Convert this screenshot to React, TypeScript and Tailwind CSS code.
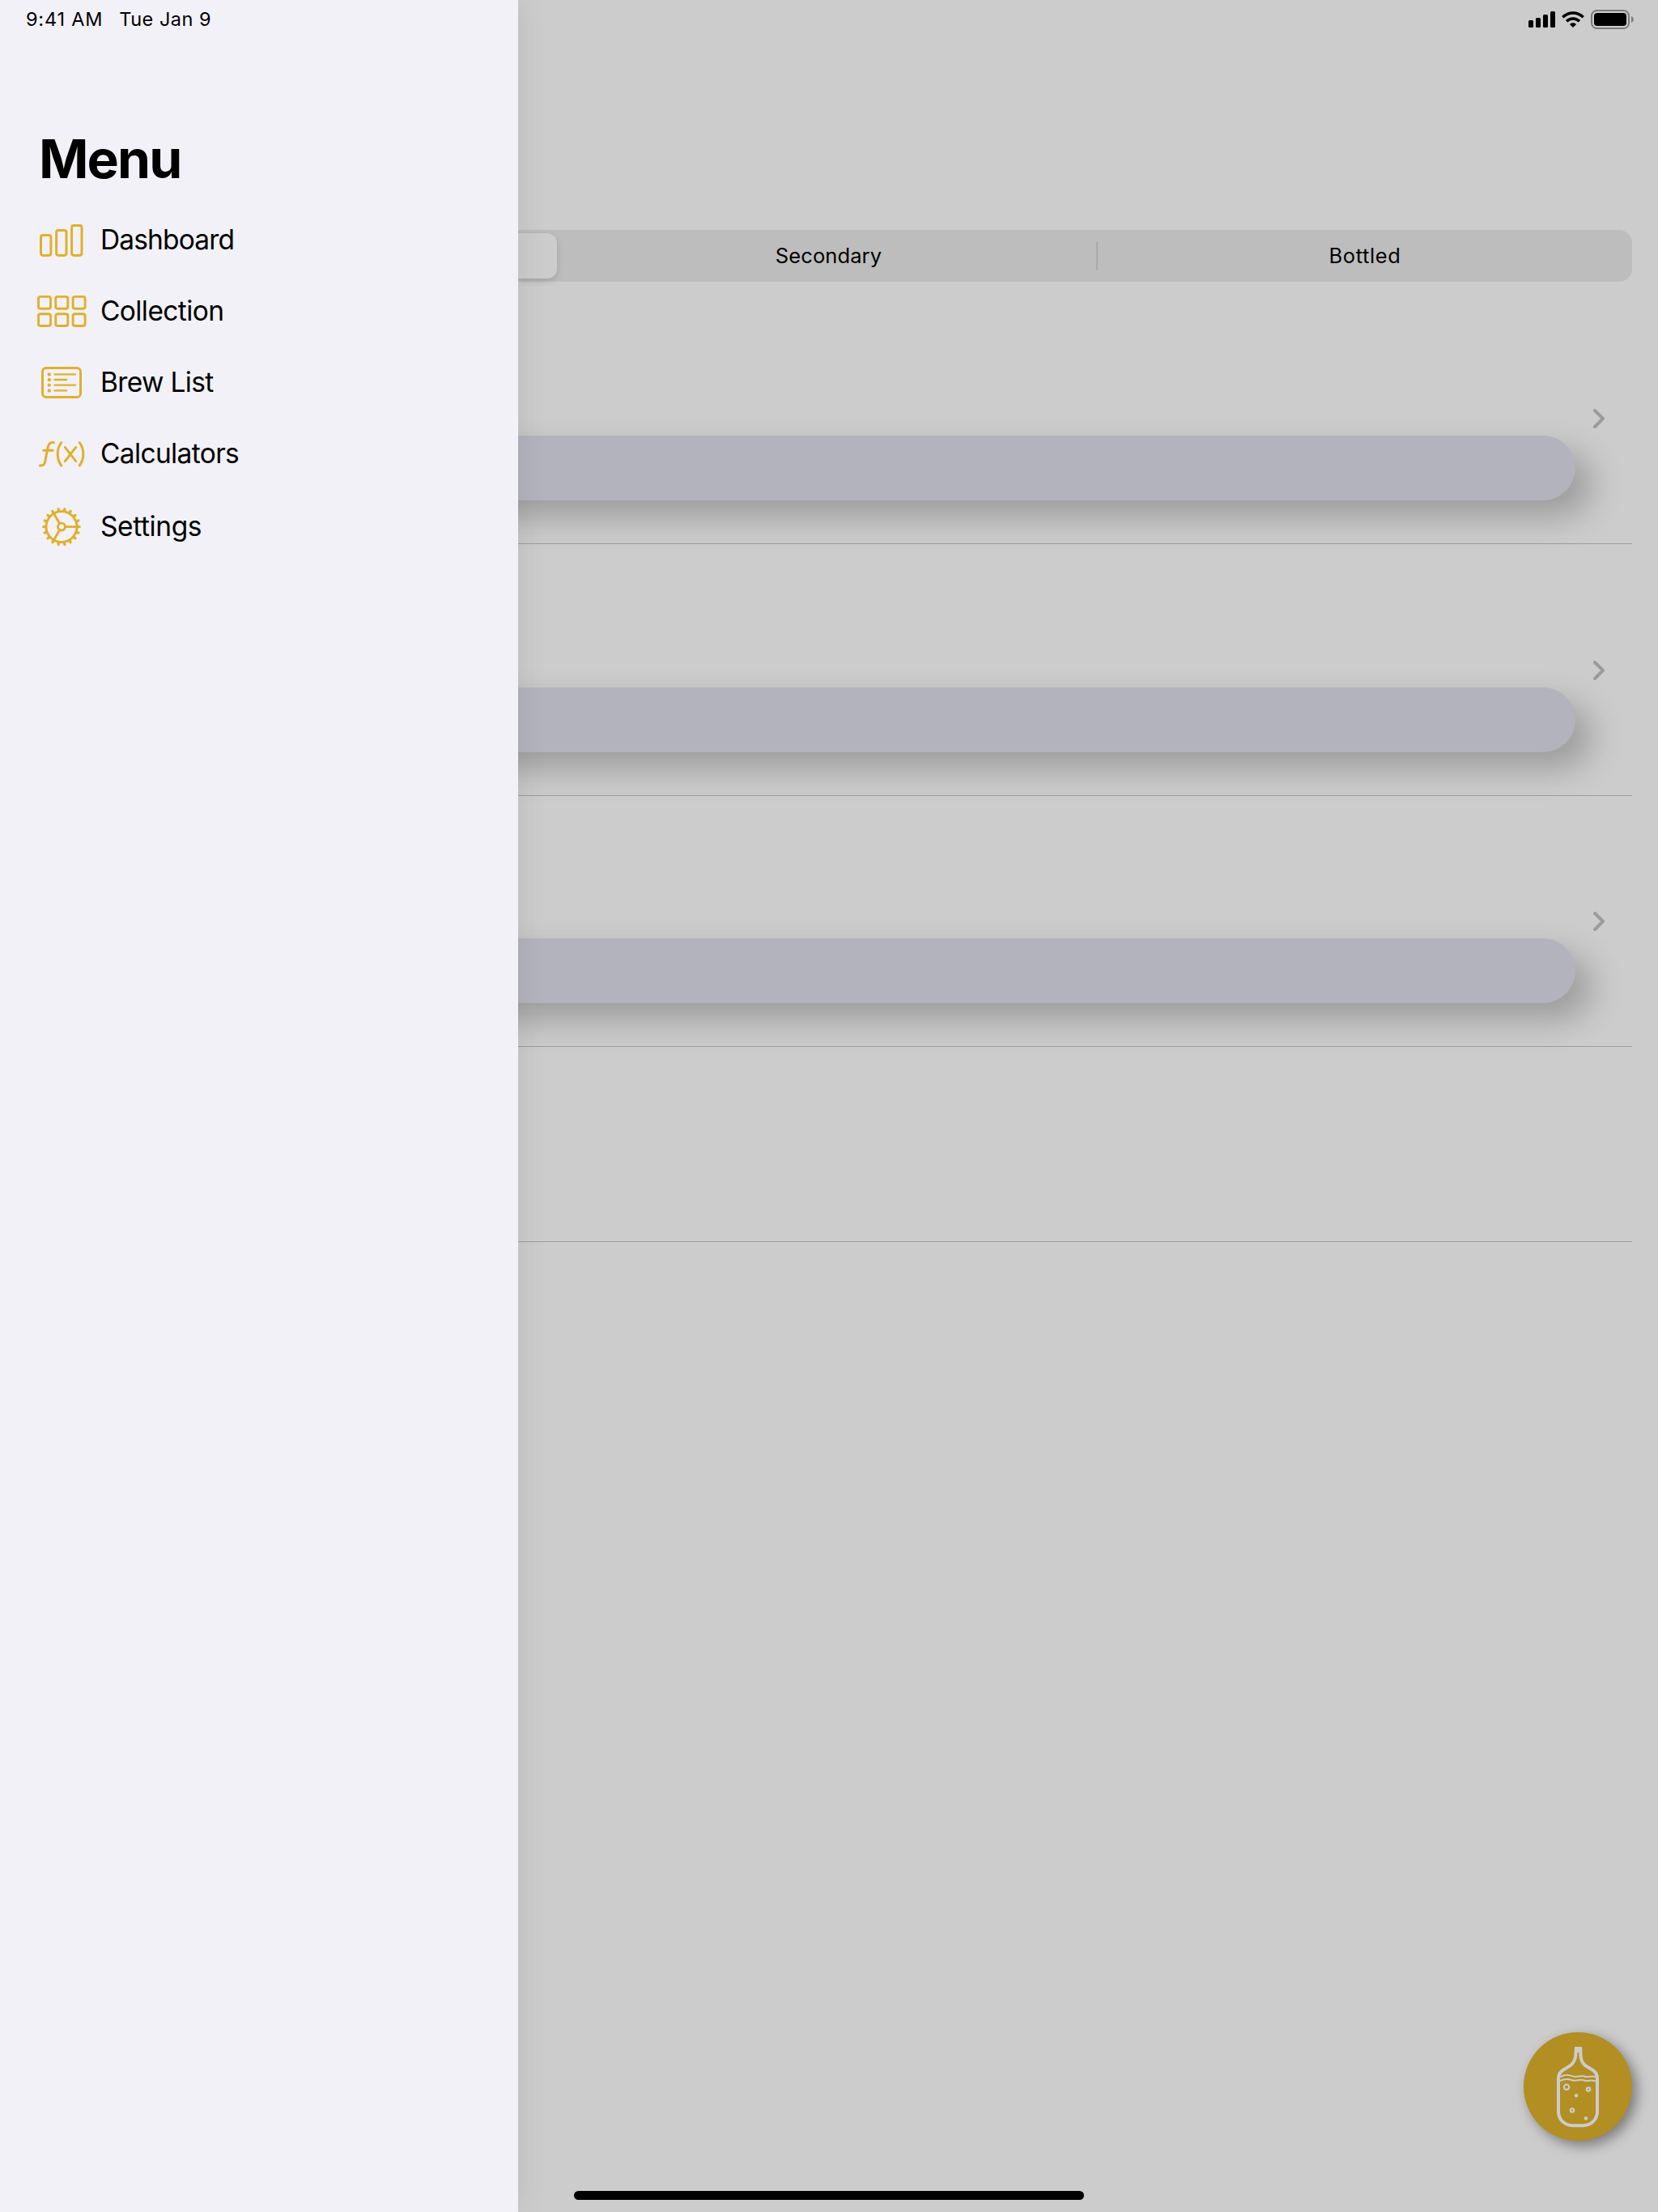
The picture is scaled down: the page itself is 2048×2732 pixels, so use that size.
import React from "react";

const GOLD = "#e0b02c";

function BarsIcon() {
  return (
    <svg width="64" height="50" viewBox="0 0 64 50" fill="none" stroke={GOLD} strokeWidth="3">
      <rect x="6.5" y="18.4" width="12.4" height="25" rx="2.6" />
      <rect x="25.6" y="12.4" width="12.4" height="31" rx="2.6" />
      <rect x="44.6" y="6.4" width="12.4" height="37" rx="2.6" />
    </svg>
  );
}

function GridIcon() {
  return (
    <svg width="64" height="50" viewBox="0 0 64 50" fill="none" stroke={GOLD} strokeWidth="2.9">
      {[3.5, 24.8, 46.1].map((x) =>
        [6.4, 27.7].map((y) => <rect key={`${x}-${y}`} x={x} y={y} width="15" height="14.8" rx="2.4" />)
      )}
    </svg>
  );
}

function ListIcon() {
  return (
    <svg width="64" height="50" viewBox="0 0 64 50" fill="none" stroke={GOLD} strokeLinecap="round">
      <rect x="8.5" y="6.4" width="47" height="36" rx="4.5" strokeWidth="3" />
      {[14.4, 21, 27.6, 34.4].map((y, i) => (
        <g key={y}>
          <circle cx="16.8" cy={y} r="2.2" fill={GOLD} stroke="none" />
          <path d={`M23.4 ${y}H${i % 2 ? 38.2 : 49}`} strokeWidth="2.3" />
        </g>
      ))}
    </svg>
  );
}

function FunctionIcon() {
  return (
    <svg width="64" height="50" viewBox="0 0 64 50" fill="none" stroke={GOLD} strokeWidth="3" strokeLinecap="round" strokeLinejoin="round">
      <path d="M5.3 39H7C9.6 39 11 37.4 11.6 34.5L15.1 16.6C15.8 12.8 17.6 10.4 20.8 10.4H22.4" />
      <path d="M9.9 20.3H21.2" />
      <path d="M31.8 10.6C25.6 18.6 25.6 30.8 31.8 39" />
      <path d="M36.3 16.4L49.7 33.6M49.7 16.4L36.3 33.6" />
      <path d="M54.2 10.6C60.4 18.6 60.4 30.8 54.2 39" />
    </svg>
  );
}

function GearIcon() {
  return (
    <svg width="64" height="50" viewBox="0 0 64 50" fill="none" stroke={GOLD} strokeWidth="2.9" className="overflow-visible">
      <circle cx="32" cy="24.6" r="19" />
      <circle cx="32" cy="24.6" r="4.5" />
      <path d="M36.5 24.6H51M29.7 20.7L22.5 8.2M29.7 28.5L22.5 41" />
      {Array.from({ length: 18 }, (_, i) => (
        <path
          key={i}
          d="M29.8 5.4L30.8 0.9H33.2L34.2 5.4Z"
          fill={GOLD}
          stroke="none"
          transform={`rotate(${i * 20 + 10} 32 24.6)`}
        />
      ))}
    </svg>
  );
}

const menu = [
  { label: "Dashboard", Icon: BarsIcon, box: "h-[88px] tracking-[-0.85px]" },
  { label: "Collection", Icon: GridIcon, box: "h-[88px] tracking-[-0.6px]" },
  { label: "Brew List", Icon: ListIcon, box: "h-[88px] tracking-[-0.65px]" },
  { label: "Calculators", Icon: FunctionIcon, box: "h-[88px] tracking-[-0.65px]" },
  { label: "Settings", Icon: GearIcon, box: "h-[92px] tracking-[-0.4px]" },
];

function StatusIcons() {
  return (
    <svg width="134" height="28" viewBox="1884 10 134 28">
      <rect x="1888" y="25" width="6" height="9" rx="1.5" />
      <rect x="1897" y="22" width="6" height="12" rx="1.5" />
      <rect x="1906" y="18" width="6" height="16" rx="1.5" />
      <rect x="1915" y="14" width="6" height="20" rx="1.5" />
      <g fill="none" stroke="#000" strokeWidth="3.6">
        <path d="M1930.3 21.3C1937.6 14.2 1948.4 14.2 1955.7 21.3" />
        <path d="M1935 26.3C1939.8 21.8 1946.2 21.8 1951 26.3" />
      </g>
      <path d="M1938.9 29.9C1941.2 27.7 1944.8 27.7 1947.1 29.9L1943 34Z" />
      <rect x="1966" y="13" width="46" height="22" rx="6.5" fill="none" stroke="#7b7b7b" strokeWidth="2" />
      <rect x="1969" y="16" width="40" height="16" rx="4" />
      <path d="M2015 20C2018.8 21.4 2018.8 26.6 2015 28Z" fill="#7b7b7b" />
    </svg>
  );
}

function Row({ top }: { top: string }) {
  return (
    <section className="flex flex-col border-b border-[#9f9fa1] pb-[53px]">
      <div className={`flex items-end justify-end pr-[33px] ${top}`}>
        <svg width="16" height="26" viewBox="0 0 16 26" fill="none" stroke="#9b9b9d" strokeWidth="4" strokeLinecap="round" strokeLinejoin="round" className="mb-[8px]">
          <path d="M3 3L13 13L3 23" />
        </svg>
      </div>
      <div className="mr-[70px] -ml-24 h-20 rounded-full bg-[#b3b3bd] shadow-[20px_20px_40px_rgba(0,0,0,0.24)]" />
    </section>
  );
}

function Bottle() {
  return (
    <svg width="134" height="134" viewBox="0 0 134 134" fill="none" stroke="#cccccc">
      <path d="M63 18H72V25H63Z" fill="#cccccc" stroke="none" />
      <path d="M64.7 20C64.7 31 63.5 36 58.5 40.5C53 45.5 43 46.5 43 57V98C43 108 51 115.2 61 115.2H73C83 115.2 91 108 91 98V57C91 46.5 81 45.5 75.5 40.5C70.5 36 70.3 31 70.3 20" strokeWidth="4" />
      <path d="M45 55.5C51 51 56 52.5 60 54.2C65 56.5 69 53 74 54.2C80 56.5 83 53.2 89 55.2" strokeWidth="2" />
      <path d="M45 60C51 57 56 58 60 59.2C65 61 69 57.5 74 59.2C80 61.5 83 57.5 89 60.5" strokeWidth="2" />
      <circle cx="53" cy="67.7" r="3.2" strokeWidth="2.2" />
      <circle cx="80" cy="70.5" r="2.2" strokeWidth="2.2" />
      <circle cx="60" cy="96.5" r="2.2" strokeWidth="2.2" />
      <circle cx="65" cy="78.3" r="2.2" fill="#cccccc" stroke="none" />
      <circle cx="77" cy="106.3" r="2.2" fill="#cccccc" stroke="none" />
    </svg>
  );
}

export default function App() {
  return (
    <div className="relative flex h-[2732px] w-[2048px] overflow-hidden bg-[#cccccc] font-['Inter','Liberation_Sans',sans-serif] text-black">
      <aside className="z-10 flex w-[640px] shrink-0 flex-col bg-[#f2f1f7] shadow-[0_0_36px_rgba(0,0,0,0.09)]">
        <div className="flex h-12 items-center gap-[20px] pl-8 text-[23.5px] font-normal whitespace-nowrap">
          <span className="tracking-[0.8px]">9:41 AM</span>
          <span className="tracking-[0.5px]">Tue Jan 9</span>
        </div>
        <h1 className="mt-[103px] h-[90px] pl-[48px] text-[66px] leading-[90px] font-bold tracking-[-1.9px]">Menu</h1>
        <nav className="mt-[12px] flex flex-col">
          {menu.map(({ label, Icon, box }) => (
            <a key={label} className={`flex items-center pl-[44px] text-[33.5px] ${box}`}>
              <Icon />
              <span className="ml-4 pb-[2px]">{label}</span>
            </a>
          ))}
        </nav>
      </aside>

      <main className="flex min-w-0 flex-1 flex-col">
        <header className="flex h-12 items-center justify-end pr-[30px]">
          <StatusIcons />
        </header>
        <div className="mt-[236px] mr-8 flex h-16 items-center rounded-r-[16px] bg-[#bdbdbd] text-[25.5px] font-normal">
          <div className="h-14 w-12 rounded-r-[12px] bg-[#cccccc] shadow-[0_3px_8px_rgba(0,0,0,0.14)]" />
          <div className="w-[666px] pl-[5px] text-center tracking-[0.1px]">Secondary</div>
          <div className="h-9 w-[2px] rounded bg-[#aaaaaa]" />
          <div className="flex-1 text-center tracking-[0.6px]">Bottled</div>
        </div>
        <div className="mt-[13px] mr-8 flex flex-col">
          <Row top="h-[177px]" />
          <Row top="h-[177px]" />
          <Row top="h-[176px]" />
          <div className="h-[241px] border-b border-[#9f9fa1]" />
        </div>
      </main>

      <button className="absolute top-[2510px] left-[1882px] size-[134px] rounded-full bg-[#b38e22] shadow-[6px_6px_16px_rgba(0,0,0,0.4)]">
        <Bottle />
      </button>
      <div className="absolute top-[2706px] left-[709px] z-20 h-[11px] w-[630px] rounded-full bg-black" />
    </div>
  );
}
